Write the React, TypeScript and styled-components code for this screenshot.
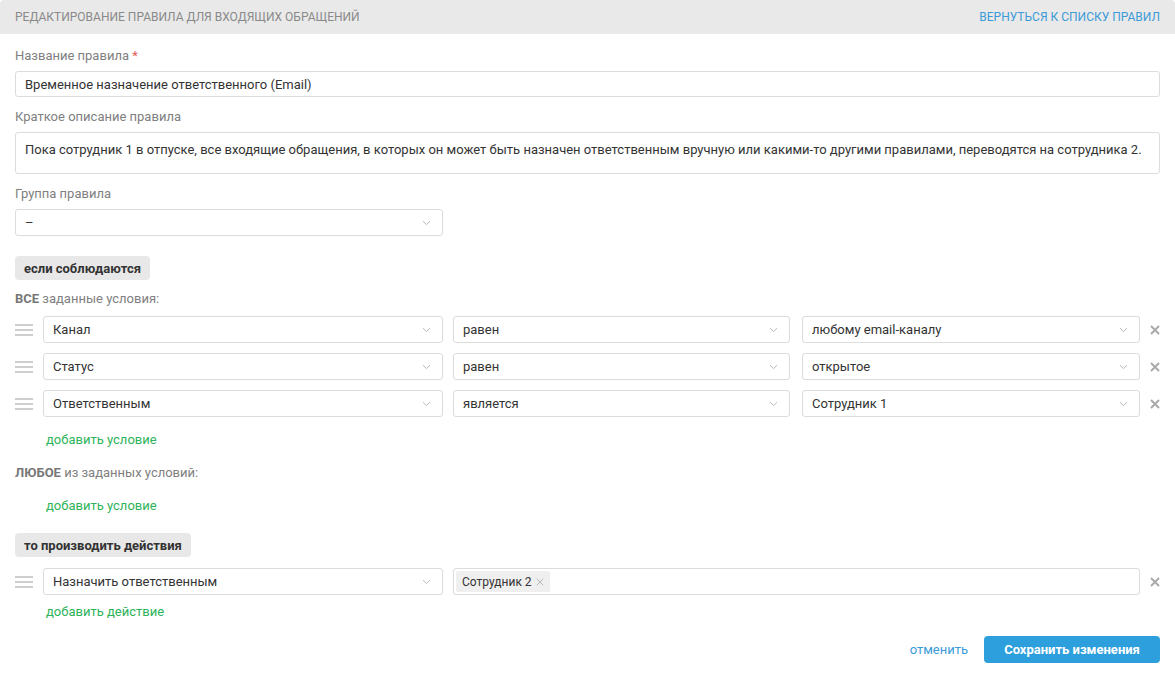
import React from "react";
import styled, { createGlobalStyle } from "styled-components";

const Global = createGlobalStyle`
  html, body { margin: 0; padding: 0; background: #fff; }
  body { font-family: Roboto, "Noto Sans", Arial, sans-serif; font-size: 13px; color: #333; }
  * { box-sizing: border-box; }
`;

const Page = styled.div`
  width: 1175px;
  display: flex;
  flex-direction: column;
`;

const Header = styled.div`
  height: 34px;
  background: #e9e9e9;
  border-radius: 4px 4px 0 0;
  display: flex;
  align-items: center;
  justify-content: space-between;
  padding: 0 15px;
  font-size: 12px;
  text-transform: uppercase;
`;

const HeaderTitle = styled.span`
  color: #8a8a8a;
`;

const HeaderLink = styled.a`
  color: #3b9bd8;
  text-decoration: none;
`;

const Body = styled.div`
  padding: 0 15px;
  display: flex;
  flex-direction: column;
`;

const Label = styled.div<{ $top: number }>`
  margin-top: ${(p) => p.$top}px;
  line-height: 16px;
  color: #808080;
  font-size: 13px;
`;

const Req = styled.span`
  color: #e85a5a;
`;

const TextInput = styled.div`
  margin-top: 7px;
  height: 26px;
  border: 1px solid #dcdcdc;
  border-radius: 3px;
  padding: 0 9px;
  display: flex;
  align-items: center;
  color: #333;
`;

const TextArea = styled.div`
  margin-top: 7px;
  height: 42px;
  border: 1px solid #dcdcdc;
  border-radius: 3px;
  padding: 8px 9px;
  line-height: 17px;
  color: #333;
`;

const SelectBox = styled.div<{ $width?: number; $top?: number; $shift?: number }>`
  margin-top: ${(p) => p.$top ?? 0}px;
  margin-left: ${(p) => p.$shift ?? 0}px;
  width: ${(p) => (p.$width ? `${p.$width}px` : "auto")};
  height: 27px;
  border: 1px solid #dcdcdc;
  border-radius: 3px;
  padding: 0 9px;
  display: flex;
  align-items: center;
  justify-content: space-between;
  color: #333;
  background: #fff;
  min-width: 0;
`;

const Chevron = () => (
  <svg width="9" height="6" viewBox="0 0 9 6" style={{ marginRight: 2 }}>
    <path d="M1 1.2 L4.5 4.6 L8 1.2" fill="none" stroke="#b8b8b8" strokeWidth="1" />
  </svg>
);

const Select = ({ value, width, top, shift }: { value: string; width?: number; top?: number; shift?: number }) => (
  <SelectBox $width={width} $top={top} $shift={shift}>
    <span>{value}</span>
    <Chevron />
  </SelectBox>
);

const Section = styled.div<{ $top: number }>`
  margin-top: ${(p) => p.$top}px;
  align-self: flex-start;
  height: 24px;
  padding: 0 9px;
  background: #e8e8e8;
  border-radius: 4px;
  display: flex;
  align-items: center;
  font-weight: 700;
  font-size: 13px;
  color: #333;
`;

const GroupLabel = styled.div<{ $top: number }>`
  margin-top: ${(p) => p.$top}px;
  line-height: 16px;
  color: #808080;
  b { color: #777; }
`;

const Rows = styled.div<{ $top: number }>`
  margin-top: ${(p) => p.$top}px;
  display: flex;
  flex-direction: column;
  gap: 10px;
`;

const Row = styled.div`
  display: grid;
  grid-template-columns: 18px 400px 337px 340px 1fr;
  column-gap: 10px;
  align-items: center;
`;

const Wide = styled.div`
  grid-column: 3 / span 2;
  height: 27px;
  border: 1px solid #dcdcdc;
  border-radius: 3px;
  padding: 0 2px;
  display: flex;
  align-items: center;
`;

const Tag = styled.span`
  height: 21px;
  padding: 0 6px;
  background: #efefef;
  border-radius: 2px;
  display: inline-flex;
  align-items: center;
  gap: 4px;
  font-size: 12px;
  color: #333;
`;

const Handle = styled.div`
  width: 18px;
  height: 12px;
  display: flex;
  flex-direction: column;
  justify-content: space-between;
  span {
    display: block;
    height: 2px;
    background: #cfcfcf;
  }
`;

const DragHandle = () => (
  <Handle>
    <span />
    <span />
    <span />
  </Handle>
);

const RemoveWrap = styled.span`
  display: flex;
  justify-content: center;
`;

const RemoveIcon = ({ size = 10, color = "#aaa", w = 2 }: { size?: number; color?: string; w?: number }) => (
  <svg width={size} height={size} viewBox="0 0 10 10">
    <path d="M1 1 L9 9 M9 1 L1 9" stroke={color} strokeWidth={w} />
  </svg>
);

const AddLink = styled.a<{ $top: number }>`
  margin-top: ${(p) => p.$top}px;
  margin-left: 31px;
  line-height: 16px;
  color: #2db35a;
  text-decoration: none;
  align-self: flex-start;
`;

const Footer = styled.div`
  margin-top: 16px;
  display: flex;
  justify-content: flex-end;
  align-items: center;
  gap: 16px;
`;

const Cancel = styled.a`
  color: #3b9bd8;
  text-decoration: none;
`;

const SaveButton = styled.button`
  width: 176px;
  height: 27px;
  border: none;
  border-radius: 4px;
  background: #2d9fdd;
  color: #fff;
  font-family: inherit;
  font-weight: 700;
  font-size: 13px;
`;

const conditions = [
  ["Канал", "равен", "любому email-каналу"],
  ["Статус", "равен", "открытое"],
  ["Ответственным", "является", "Сотрудник 1"],
];

export default function App() {
  return (
    <>
      <Global />
      <Page>
        <Header>
          <HeaderTitle>Редактирование правила для входящих обращений</HeaderTitle>
          <HeaderLink>Вернуться к списку правил</HeaderLink>
        </Header>
        <Body>
          <Label $top={14}>
            Название правила <Req>*</Req>
          </Label>
          <TextInput>Временное назначение ответственного (Email)</TextInput>
          <Label $top={12}>Краткое описание правила</Label>
          <TextArea>
            Пока сотрудник 1 в отпуске, все входящие обращения, в которых он может быть назначен ответственным вручную или какими-то другими правилами, переводятся на сотрудника 2.
          </TextArea>
          <Label $top={12}>Группа правила</Label>
          <Select value="–" width={428} top={7} />
          <Section $top={20}>если соблюдаются</Section>
          <GroupLabel $top={11}>
            <b>ВСЕ</b> заданные условия:
          </GroupLabel>
          <Rows $top={9}>
            {conditions.map((c) => (
              <Row key={c[0]}>
                <DragHandle />
                <Select value={c[0]} />
                <Select value={c[1]} />
                <Select value={c[2]} shift={2} />
                <RemoveWrap>
                  <RemoveIcon />
                </RemoveWrap>
              </Row>
            ))}
          </Rows>
          <AddLink $top={15}>добавить условие</AddLink>
          <GroupLabel $top={17}>
            <b>ЛЮБОЕ</b> из заданных условий:
          </GroupLabel>
          <AddLink $top={17}>добавить условие</AddLink>
          <Section $top={19}>то производить действия</Section>
          <Rows $top={11}>
            <Row>
              <DragHandle />
              <Select value="Назначить ответственным" />
              <Wide>
                <Tag>
                  Сотрудник 2 <RemoveIcon size={8} color="#aaa" w={1} />
                </Tag>
              </Wide>
              <RemoveWrap>
                <RemoveIcon />
              </RemoveWrap>
            </Row>
          </Rows>
          <AddLink $top={9}>добавить действие</AddLink>
          <Footer>
            <Cancel>отменить</Cancel>
            <SaveButton>Сохранить изменения</SaveButton>
          </Footer>
        </Body>
      </Page>
    </>
  );
}
